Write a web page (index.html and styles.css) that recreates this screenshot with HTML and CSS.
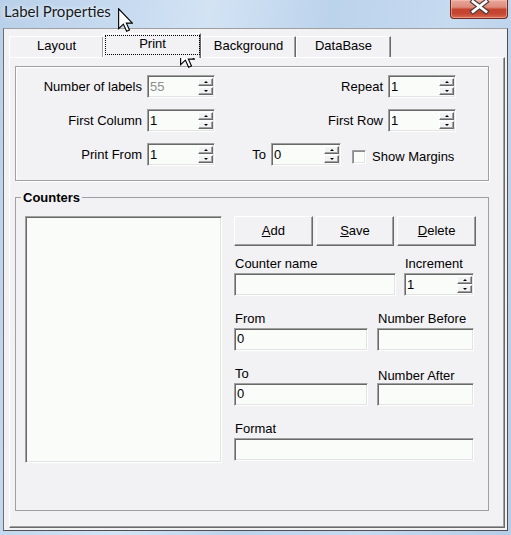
FILE: index.html
```html
<!DOCTYPE html>
<html>
<head>
<meta charset="utf-8">
<title>Label Properties</title>
<link rel="stylesheet" href="styles.css">
</head>
<body>
<div class="window">
  <div class="titlebar">
    <span class="title">Label Properties</span>
    <div class="close">
      <svg width="58" height="19" viewBox="0 0 58 19">
        <path d="M23 2.5 L36 12.5 M36 2.5 L23 12.5" stroke="#4a3a38" stroke-width="5" stroke-linecap="square"/>
        <path d="M23 2.5 L36 12.5 M36 2.5 L23 12.5" stroke="#ffffff" stroke-width="2.8" stroke-linecap="square"/>
      </svg>
    </div>
  </div>
  <div class="client">
    <div class="tabs">
      <div class="tab">Layout</div>
      <div class="tab selected"><span class="focus">Print</span></div>
      <div class="tab">Background</div>
      <div class="tab">DataBase</div>
    </div>
    <div class="panel">
      <div class="options">
        <div class="row">
          <span class="lbl-l">Number of labels</span>
          <div class="spin disabled"><span class="val">55</span><div class="spin-btns"><span class="sb up"></span><span class="sb down"></span></div></div>
          <span class="lbl-r push-right">Repeat</span>
          <div class="spin"><span class="val">1</span><div class="spin-btns"><span class="sb up"></span><span class="sb down"></span></div></div>
        </div>
        <div class="row">
          <span class="lbl-l">First Column</span>
          <div class="spin"><span class="val">1</span><div class="spin-btns"><span class="sb up"></span><span class="sb down"></span></div></div>
          <span class="lbl-r push-right">First Row</span>
          <div class="spin"><span class="val">1</span><div class="spin-btns"><span class="sb up"></span><span class="sb down"></span></div></div>
        </div>
        <div class="row">
          <span class="lbl-l">Print From</span>
          <div class="spin"><span class="val">1</span><div class="spin-btns"><span class="sb up"></span><span class="sb down"></span></div></div>
          <span class="lbl-to">To</span>
          <div class="spin spin-wide"><span class="val">0</span><div class="spin-btns"><span class="sb up"></span><span class="sb down"></span></div></div>
          <span class="check"></span>
          <span class="check-lbl">Show Margins</span>
        </div>
      </div>
      <fieldset class="counters">
        <legend class="legend">Counters</legend>
        <div class="listbox"></div>
        <div class="editor">
          <div class="buttons">
            <div class="btn"><u>A</u>dd</div>
            <div class="btn"><u>S</u>ave</div>
            <div class="btn"><u>D</u>elete</div>
          </div>
          <div class="fields">
            <div class="field-row">
              <div class="field f-name"><span class="flbl">Counter name</span><div class="edit"></div></div>
              <div class="field f-inc"><span class="flbl">Increment</span><div class="spin spin-wide"><span class="val">1</span><div class="spin-btns"><span class="sb up"></span><span class="sb down"></span></div></div></div>
            </div>
            <div class="field-row">
              <div class="field f-left"><span class="flbl">From</span><div class="edit">0</div></div>
              <div class="field f-right"><span class="flbl">Number Before</span><div class="edit"></div></div>
            </div>
            <div class="field-row">
              <div class="field f-left"><span class="flbl">To</span><div class="edit">0</div></div>
              <div class="field f-right"><span class="flbl flbl-low">Number After</span><div class="edit"></div></div>
            </div>
            <div class="field-row">
              <div class="field f-full"><span class="flbl">Format</span><div class="edit"></div></div>
            </div>
          </div>
        </div>
      </fieldset>
    </div>
  </div>
  <svg class="cursor cursor-title" width="15" height="24" viewBox="0 0 12 19"><path d="M0.5 0.5 V16.5 L4.3 12.8 L6.9 18.5 L9.2 17.5 L6.7 12 H11.5 Z" fill="#fff" stroke="#000" stroke-width="0.9" stroke-linejoin="miter"/></svg>
  <svg class="cursor cursor-tab" width="15" height="24" viewBox="0 0 12 19"><path d="M0.5 0.5 V16.5 L4.3 12.8 L6.9 18.5 L9.2 17.5 L6.7 12 H11.5 Z" fill="#fff" stroke="#000" stroke-width="0.9" stroke-linejoin="miter"/></svg>
</div>
</body>
</html>
```

FILE: styles.css
```css
body {
  margin: 0;
  font-family: "Liberation Sans", Arial, sans-serif;
  font-size: 13px;
  color: #000;
}

.window {
  position: relative;
  width: 511px;
  height: 535px;
  overflow: hidden;
  background:
    linear-gradient(100deg, #b9d0ea 0%, #c8dbf0 22%, #d3e3f4 35%, #bcd3ec 55%, #c6daf0 75%, #b5cde8 100%);
}

.titlebar {
  height: 28px;
  display: flex;
  align-items: flex-start;
}

.title {
  font-family: Lato, "Open Sans", sans-serif;
  font-size: 15px;
  line-height: 18px;
  margin: 2px 0 0 4px;
  color: #1a1a1a;
  text-shadow: 0 0 5px #e6f0fa, 0 0 3px #e6f0fa;
}

.close {
  margin-left: auto;
  margin-right: 3px;
  width: 58px;
  height: 19px;
  box-sizing: border-box;
  border: 1px solid #6b2a22;
  border-top: none;
  border-radius: 0 0 4px 4px;
  background: linear-gradient(180deg, #e9a99b 0%, #dc8a7a 40%, #c4442f 52%, #c54631 75%, #d86a50 100%);
  box-shadow: inset 0 0 0 1px rgba(255, 200, 190, 0.5);
}

.close svg {
  display: block;
  margin: -1px 0 0 -1px;
}

.client {
  margin-left: 3px;
  width: 505px;
  height: 503px;
  box-sizing: border-box;
  border: 1px solid;
  border-color: #a0a0a0 #505050 #505050 #6e6e6e;
  background: #f2f1f4;
  padding: 4px 0 0 5px;
}

.tabs {
  display: flex;
  align-items: flex-end;
  height: 24px;
  position: relative;
  z-index: 1;
}

.tab {
  box-sizing: border-box;
  width: 95px;
  height: 21px;
  border-top: 1px solid #fff;
  border-left: 1px solid #fff;
  border-right: 1px solid #696969;
  box-shadow: inset -1px 0 #a0a0a0;
  background: #f2f1f4;
  text-align: center;
  line-height: 15px;
  padding-top: 1px;
}

.tab.selected {
  width: 98px;
  height: 25px;
  margin: 0 0 -1px -1px;
  padding-top: 0;
  position: relative;
  z-index: 1;
}

.focus {
  display: block;
  box-sizing: border-box;
  width: 95px;
  height: 20px;
  margin: 1px 0 0 1px;
  border: 1px dotted #000;
  line-height: 15px;
}

.panel {
  box-sizing: border-box;
  width: 496px;
  height: 471px;
  border: 1px solid;
  border-color: #fff #696969 #696969 #fff;
  box-shadow: inset -1px -1px #a0a0a0;
  padding: 8px 0 0 5px;
}

.options {
  box-sizing: border-box;
  width: 474px;
  height: 115px;
  border: 1px solid #a0a0a0;
  box-shadow: inset 1px 1px #fff, 1px 1px #fff;
  padding: 8px 32px 0 0;
  display: flex;
  flex-direction: column;
  gap: 11px;
}

.row {
  display: flex;
  align-items: center;
  height: 23px;
}

.lbl-l {
  width: 126px;
  text-align: right;
  margin-right: 5px;
  white-space: nowrap;
}

.lbl-r {
  margin-right: 5px;
  white-space: nowrap;
}

.push-right {
  margin-left: auto;
}

.lbl-to {
  width: 20px;
  margin-left: 31px;
  margin-right: 5px;
  text-align: right;
}

.spin {
  box-sizing: border-box;
  width: 68px;
  height: 23px;
  display: flex;
  background: #fafcfa;
  border: 1px solid;
  border-color: #a0a0a0 #fff #fff #a0a0a0;
  box-shadow: inset 1px 1px #696969, inset -1px -1px #e3e3e3;
  padding: 1px 0 1px 2px;
}

.spin-wide {
  width: 70px;
}

.val {
  flex: 1;
  line-height: 19px;
}

.disabled .val {
  color: #8d8d8d;
}

.spin-btns {
  display: flex;
  flex-direction: column;
  gap: 1px;
  width: 15px;
  margin: 1px 1px 1px 0;
}

.sb {
  flex: 1;
  box-sizing: border-box;
  border: 1px solid;
  border-color: #fff #696969 #696969 #fff;
  box-shadow: inset -1px -1px #a0a0a0;
  background: #f2f1f4;
  display: flex;
  align-items: center;
  justify-content: center;
}

.sb::before {
  content: "";
  width: 0;
  height: 0;
  border-left: 2px solid transparent;
  border-right: 2px solid transparent;
}

.sb.up::before {
  border-bottom: 2px solid #000;
}

.sb.down::before {
  border-top: 2px solid #000;
}

.check {
  box-sizing: border-box;
  width: 14px;
  height: 14px;
  margin: 4px 6px 0 11px;
  background: #fafcfa;
  border: 1px solid;
  border-color: #a0a0a0 #fff #fff #a0a0a0;
  box-shadow: inset 1px 1px #8a8a8a, inset -1px -1px #e3e3e3;
}

.check-lbl {
  white-space: nowrap;
  padding-top: 3px;
}

.counters {
  box-sizing: border-box;
  width: 474px;
  height: 321px;
  margin: 9px 0 0;
  padding: 11px 0 0 9px;
  border: 1px solid #a0a0a0;
  min-width: 0;
  display: flex;
  gap: 12px;
}

.legend {
  font-weight: bold;
  line-height: 15px;
  padding: 0 2px;
  margin-left: -4px;
}

.listbox {
  box-sizing: border-box;
  width: 197px;
  height: 247px;
  background: #fafcfa;
  border: 1px solid;
  border-color: #a0a0a0 #fff #fff #a0a0a0;
  box-shadow: inset 1px 1px #696969, inset -1px -1px #e3e3e3;
}

.editor {
  width: 242px;
  display: flex;
  flex-direction: column;
}

.buttons {
  display: grid;
  grid-template-columns: repeat(3, 1fr);
  gap: 3px;
  height: 30px;
}

.btn {
  box-sizing: border-box;
  border: 1px solid;
  border-color: #fff #696969 #696969 #fff;
  box-shadow: inset -1px -1px #a0a0a0;
  background: #f2f1f4;
  text-align: center;
  line-height: 28px;
}

.fields {
  margin-top: 10px;
  display: flex;
  flex-direction: column;
  gap: 15px;
  width: 240px;
}

.field-row {
  display: flex;
  justify-content: space-between;
}

.field {
  display: flex;
  flex-direction: column;
}

.flbl {
  line-height: 15px;
  margin-bottom: 2px;
  padding-left: 1px;
  white-space: nowrap;
}

.flbl-low {
  padding-top: 2px;
  margin-bottom: 0;
}

.f-name { width: 162px; }
.f-inc { width: 70px; }
.f-left { width: 134px; }
.f-right { width: 97px; }
.f-full { width: 240px; }

.edit {
  box-sizing: border-box;
  height: 23px;
  background: #fafcfa;
  border: 1px solid;
  border-color: #a0a0a0 #fff #fff #a0a0a0;
  box-shadow: inset 1px 1px #696969, inset -1px -1px #e3e3e3;
  padding-left: 2px;
  line-height: 20px;
}

.cursor {
  position: absolute;
  display: block;
}

.cursor-title {
  left: 118px;
  top: 8px;
}

.cursor-tab {
  left: 180px;
  top: 44px;
}
```
